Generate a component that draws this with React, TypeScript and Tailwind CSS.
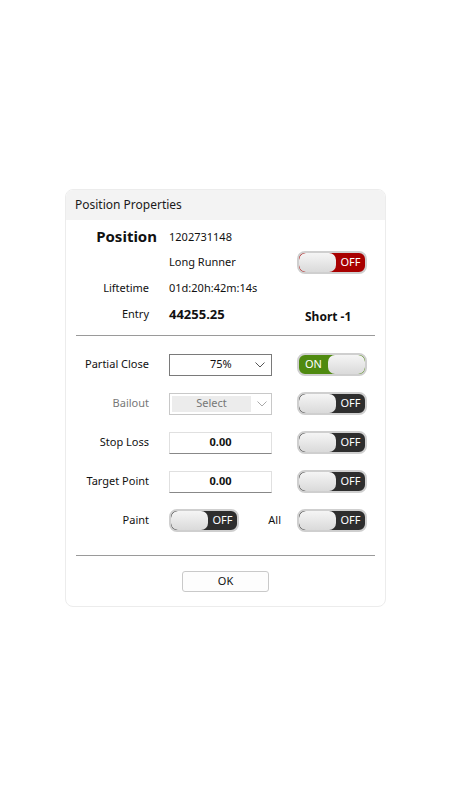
import React from "react"

const font = { fontFamily: '"Noto Sans", "Open Sans", sans-serif' }

const Toggle = ({ on, tone }: { on?: boolean; tone: "red" | "dark" | "green" }) => {
    const bg = tone === "red" ? "bg-[#a80000]" : tone === "green" ? "bg-[#4f8a10]" : "bg-[#2e2e2e]"
    const knob = <div className="h-full w-[37px] rounded-[7px] bg-gradient-to-b from-[#f5f5f5] to-[#dadada]" />
    return (
        <div className={`flex h-[23px] w-[70px] items-center overflow-hidden rounded-[8px] border-2 border-[#cfcfcf] ${bg}`}>
            {on ? (
                <>
                    <span className="flex-1 pl-[6px] text-[11px] text-white">ON</span>
                    {knob}
                </>
            ) : (
                <>
                    {knob}
                    <span className="flex-1 text-center text-[11px] text-white">OFF</span>
                </>
            )}
        </div>
    )
}

const Chevron = ({ color }: { color: string }) => (
    <svg width="10" height="6" viewBox="0 0 10 6" fill="none">
        <path d="M0.5 0.5 L5 5 L9.5 0.5" stroke={color} strokeWidth="1" />
    </svg>
)

export default function App() {
    return (
        <div className="min-h-[800px] w-[450px] bg-white pt-[189px] pl-[65px]" style={font}>
            <div className="w-[321px] overflow-hidden rounded-[8px] border border-[#ececec] bg-white">
                <div className="flex h-[30px] items-center bg-[#f3f3f3] pl-[9px] text-[12px] text-[#1a1a1a]">Position Properties</div>

                <div className="px-[10px]">
                    <div className="grid grid-cols-[93px_128px_70px] items-center pt-[4px] text-[11px] text-[#111]">
                        <div className="h-[25px] pr-[12px] text-right text-[15px] font-bold leading-[25px]">Position</div>
                        <div className="col-span-2 h-[25px] leading-[25px]">1202731148</div>

                        <div />
                        <div className="h-[26px] leading-[26px]">Long Runner</div>
                        <Toggle tone="red" />

                        <div className="h-[26px] pr-[20px] text-right leading-[26px]">Liftetime</div>
                        <div className="col-span-2 h-[26px] leading-[26px]">01d:20h:42m:14s</div>

                        <div className="h-[26px] pr-[20px] text-right leading-[26px]">Entry</div>
                        <div className="h-[26px] text-[13px] font-bold leading-[26px]">44255.25</div>
                        <div className="h-[26px] pt-[3px] pl-[8px] text-[12px] font-bold leading-[26px]">Short -1</div>
                    </div>

                    <div className="mt-[8px] h-px bg-[#9a9a9a]" />

                    <div className="grid grid-cols-[93px_128px_70px] items-center gap-y-[16px] pt-[17px] text-[11px] text-[#111]">
                        <div className="pr-[20px] text-right">Partial Close</div>
                        <div className="flex h-[22px] w-[103px] items-center justify-between border border-[#7a7a7a] bg-white pl-[40px] pr-[6px]">
                            <span>75%</span>
                            <Chevron color="#555" />
                        </div>
                        <Toggle on tone="green" />

                        <div className="pr-[20px] text-right text-[#777]">Bailout</div>
                        <div className="flex h-[22px] w-[103px] items-center justify-between border border-[#c8c8c8] bg-white p-[2px] pr-[4px]">
                            <span className="flex h-full w-[79px] items-center justify-center bg-[#ececec] text-[#777]">Select</span>
                            <Chevron color="#aaa" />
                        </div>
                        <Toggle tone="dark" />

                        <div className="pr-[20px] text-right">Stop Loss</div>
                        <div className="flex h-[22px] w-[103px] items-center justify-center border border-[#e0e0e0] border-b-[#888] bg-white font-bold">0.00</div>
                        <Toggle tone="dark" />

                        <div className="pr-[20px] text-right">Target Point</div>
                        <div className="flex h-[22px] w-[103px] items-center justify-center border border-[#e0e0e0] border-b-[#888] bg-white font-bold">0.00</div>
                        <Toggle tone="dark" />

                        <div className="pr-[20px] text-right">Paint</div>
                        <div className="flex items-center justify-between pr-[16px]">
                            <Toggle tone="dark" />
                            <span>All</span>
                        </div>
                        <Toggle tone="dark" />
                    </div>

                    <div className="mt-[23px] h-px bg-[#9a9a9a]" />

                    <div className="flex justify-center pt-[15px] pb-[14px]">
                        <button className="h-[21px] w-[87px] rounded-[3px] border border-[#c9c9c9] bg-[#fdfdfd] text-[11px] text-[#111]">OK</button>
                    </div>
                </div>
            </div>
        </div>
    )
}
